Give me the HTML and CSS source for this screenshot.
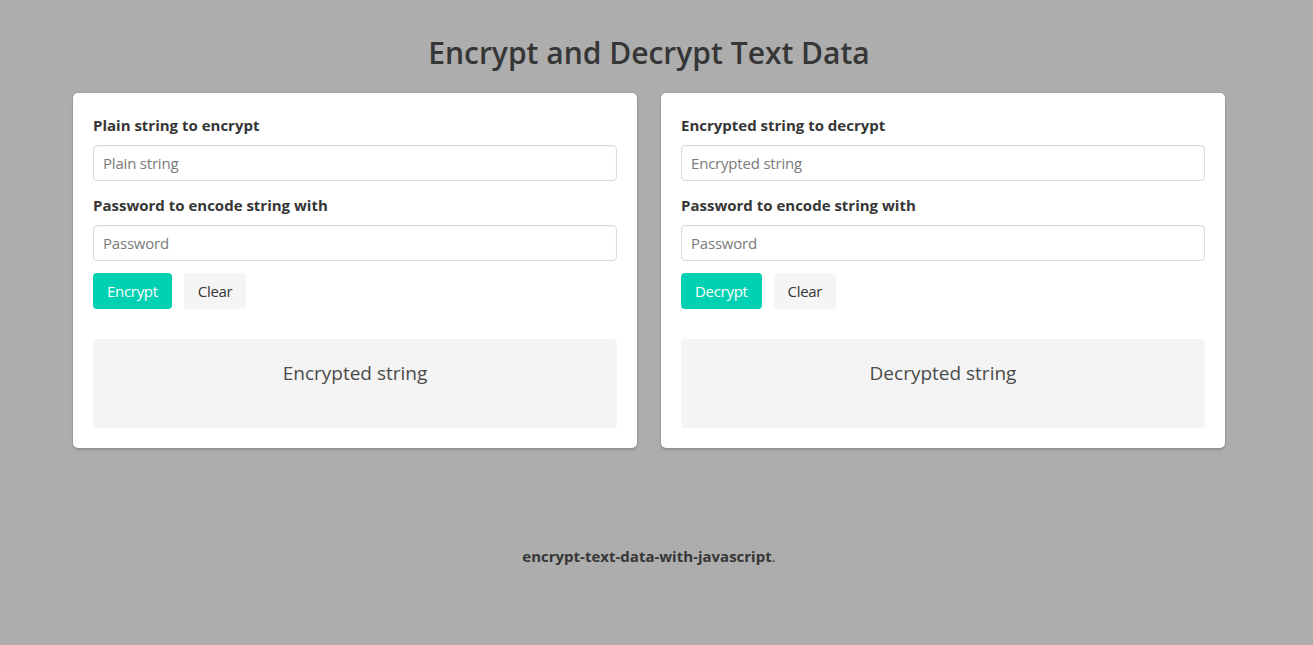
FILE: index.html
```html
<!DOCTYPE html>
<html lang="en">
<head>
<meta charset="utf-8">
<title>Encrypt and Decrypt Text Data</title>
<link rel="stylesheet" href="styles.css">
</head>
<body>
<main class="page">
  <h1 class="title">Encrypt and Decrypt Text Data</h1>
  <div class="columns">
    <section class="card">
      <div class="field">
        <label class="label">Plain string to encrypt</label>
        <input class="input" type="text" placeholder="Plain string">
      </div>
      <div class="field">
        <label class="label">Password to encode string with</label>
        <input class="input" type="text" placeholder="Password">
      </div>
      <div class="buttons">
        <button class="button is-primary">Encrypt</button>
        <button class="button">Clear</button>
      </div>
      <div class="output">Encrypted string</div>
    </section>
    <section class="card">
      <div class="field">
        <label class="label">Encrypted string to decrypt</label>
        <input class="input" type="text" placeholder="Encrypted string">
      </div>
      <div class="field">
        <label class="label">Password to encode string with</label>
        <input class="input" type="text" placeholder="Password">
      </div>
      <div class="buttons">
        <button class="button is-primary">Decrypt</button>
        <button class="button">Clear</button>
      </div>
      <div class="output">Decrypted string</div>
    </section>
  </div>
  <footer class="footer"><strong>encrypt-text-data-with-javascript</strong>.</footer>
</main>
</body>
</html>
```

FILE: styles.css
```css
html, body {
  margin: 0;
  padding: 0;
  background: #adadad;
  font-family: "Open Sans", "Noto Sans", sans-serif;
  color: #4a4a4a;
}
.page {
  width: 1298px;
  display: flex;
  flex-direction: column;
  align-items: center;
}
.title {
  margin: 33px 0 0;
  font-size: 30px;
  line-height: 40px;
  font-weight: 600;
  color: #363636;
}
.columns {
  margin-top: 20px;
  display: flex;
  gap: 24px;
}
.card {
  width: 564px;
  box-sizing: border-box;
  background: #fff;
  border-radius: 5px;
  padding: 20px;
  box-shadow: 0 2px 3px rgba(10,10,10,0.15), 0 0 0 1px rgba(10,10,10,0.06);
}
.field {
  margin-bottom: 12px;
}
.label {
  display: block;
  font-size: 15px;
  line-height: 24px;
  font-weight: 700;
  color: #363636;
  margin-bottom: 8px;
}
.input {
  display: block;
  width: 100%;
  box-sizing: border-box;
  height: 36px;
  border: 1px solid #dbdbdb;
  border-radius: 4px;
  padding: 0 9px;
  font-family: inherit;
  font-size: 15px;
  color: #363636;
  box-shadow: inset 0 1px 2px rgba(10,10,10,0.05);
  outline: none;
}
.input::placeholder {
  color: #7a7a7a;
  letter-spacing: -0.2px;
}
.buttons {
  display: flex;
  gap: 12px;
}
.button {
  height: 36px;
  border: 1px solid transparent;
  border-radius: 4px;
  padding: 0 13px;
  font-family: inherit;
  font-size: 15px;
  background: #f5f5f5;
  color: #363636;
  letter-spacing: -0.3px;
}
.button.is-primary {
  background: #00d1b2;
  color: #fff;
}
.output {
  margin-top: 30px;
  height: 89px;
  box-sizing: border-box;
  padding-top: 20px;
  background: #f4f4f4;
  border-radius: 4px;
  text-align: center;
  font-size: 19px;
  line-height: 28px;
  color: #4a4a4a;
}
.footer {
  margin-top: 96px;
  font-size: 15px;
  line-height: 24px;
  color: #4a4a4a;
}
.footer strong {
  color: #363636;
  font-weight: 700;
}
```
